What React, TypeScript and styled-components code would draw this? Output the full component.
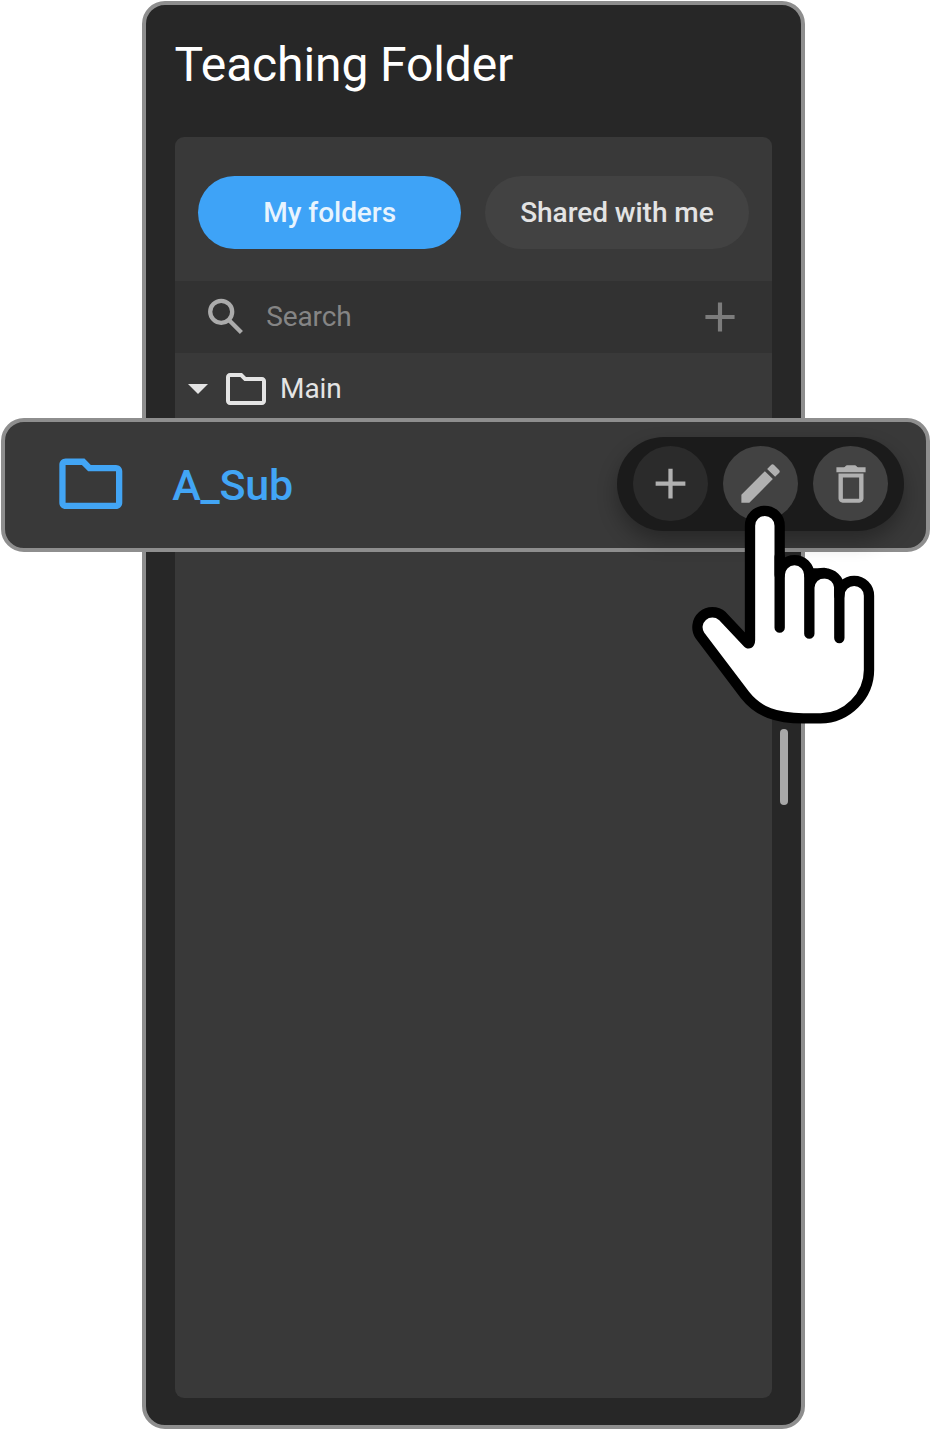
import React from "react";
import styled, { createGlobalStyle } from "styled-components";
import { MdAdd, MdArrowDropDown, MdEdit } from "react-icons/md";

const GlobalStyle = createGlobalStyle`
  *, *::before, *::after { box-sizing: border-box; }
  body { margin: 0; background: #fff; font-family: Roboto, sans-serif; }
  svg { display: block; flex: none; }
`;

const Page = styled.main`
  position: relative;
  width: 930px;
  height: 1430px;
  padding: 0.7px 0 0 142.3px;
  overflow: hidden;
`;

const Panel = styled.section`
  display: flex;
  flex-direction: column;
  width: 662.4px;
  height: 1428.6px;
  padding: 0 0 0 28.3px;
  background: #272727;
  border: 4px solid #8e8e8e;
  border-radius: 23px;
`;

const Title = styled.h1`
  height: 132.3px;
  margin: 0;
  padding-top: 32px;
  color: #fff;
  font-size: 48px;
  font-weight: 400;
  line-height: 56px;
  letter-spacing: -0.12px;
`;

const Body = styled.div`
  display: flex;
  align-items: flex-start;
`;

const Browser = styled.div`
  width: 597.4px;
  height: 1261px;
  background: #393939;
  border-radius: 9px;
  overflow: hidden;
`;

const Scrollbar = styled.div`
  width: 8px;
  height: 76px;
  margin: 592px 0 0 8.3px;
  border-radius: 4px;
  background: #a8a8a8;
`;

const Tabs = styled.div`
  display: flex;
  gap: 24px;
  height: 144px;
  padding: 39.5px 23.5px 0;
`;

const Tab = styled.button<{ $active?: boolean }>`
  flex: 1;
  height: 72.5px;
  padding: 0 0 1px;
  border: 0;
  border-radius: 37px;
  background: ${(p) => (p.$active ? "#3ea3f7" : "#424242")};
  color: ${(p) => (p.$active ? "#e8f4fe" : "#e3e3e3")};
  font: 500 28px Roboto, sans-serif;
  letter-spacing: -0.05px;
`;

const SearchBar = styled.div`
  display: flex;
  align-items: center;
  height: 72px;
  padding: 0 26.6px 0 27.6px;
  background: #323232;
  color: #ababab;
`;

const Placeholder = styled.span`
  flex: 1;
  margin-left: 16px;
  color: #858585;
  font-size: 28px;
  letter-spacing: -0.1px;
`;

const AddButton = styled.span`
  color: #7c7c7c;
`;

const TreeRow = styled.div`
  display: flex;
  align-items: center;
  height: 72px;
  color: #e4e4e4;
  font-size: 28px;
`;

const Caret = styled(MdArrowDropDown)`
  margin: -2px 0 0 -0.5px;
`;

const TreeLabel = styled.span`
  margin-left: 10px;
  letter-spacing: -0.15px;
`;

const SelectedRow = styled.div`
  position: absolute;
  left: 0.5px;
  top: 417.7px;
  display: flex;
  align-items: center;
  width: 929.5px;
  height: 134px;
  padding: 0 22.1px 2px 48.2px;
  background: #393939;
  border: 4px solid #8e8e8e;
  border-radius: 23px;
  color: #42a5f5;
`;

const SelectedLabel = styled.span`
  flex: 1;
  margin-left: 44px;
  padding-top: 2.4px;
  font-size: 43px;
  font-weight: 500;
  letter-spacing: -0.25px;
`;

const Actions = styled.div`
  display: flex;
  align-items: center;
  gap: 15.3px;
  width: 286.6px;
  height: 94px;
  padding: 0 15.5px;
  border-radius: 47px;
  background: #1b1b1b;
  box-shadow: 0 10px 20px rgba(0, 0, 0, 0.3);
`;

const Action = styled.button<{ $dim?: boolean }>`
  display: grid;
  place-items: center;
  width: 75px;
  height: 75px;
  padding: 0;
  border: 0;
  border-radius: 50%;
  background: ${(p) => (p.$dim ? "#2b2b2b" : "#424242")};
  color: #b0b0b0;
`;

const Pointer = styled.svg`
  position: absolute;
  left: 680px;
  top: 490px;
`;

function SearchIcon() {
  return (
    <svg width="48" height="48" viewBox="0 0 24 24" fill="none" stroke="currentColor" strokeWidth="2.15">
      <circle cx="9.6" cy="9.4" r="5.5" />
      <path d="M13.7 13.7L19.7 19.7" />
    </svg>
  );
}

function FolderIcon({ size }: { size: number }) {
  return (
    <svg width={size} height={size} viewBox="0 0 24 24" fill="currentColor">
      <path d="M9.17 6l2 2H20v10H4V6h5.17M10 4H4c-1.1 0-1.99.9-1.99 2L2 18c0 1.1.9 2 2 2h16c1.1 0 2-.9 2-2V8c0-1.1-.9-2-2-2h-8l-2-2z" />
    </svg>
  );
}

function TrashIcon() {
  return (
    <svg width="50" height="50" viewBox="0 0 24 24" fill="currentColor" fillRule="evenodd">
      <path d="M5 4h3.6c.6 0 .8-1 1.6-1h3.6c.8 0 1 1 1.6 1H19v2.35H5z" />
      <path d="M6 6.95h12V19c0 1.1-.9 2-2 2H8c-1.1 0-2-.9-2-2zM8.1 8.9v10.2h7.8V8.9z" />
    </svg>
  );
}

function HandPointer() {
  return (
    <Pointer
      width="210"
      height="240"
      viewBox="0 0 630 720"
      fill="none"
      stroke="#000"
      strokeWidth="31"
      strokeLinecap="round"
      strokeLinejoin="round"
    >
      <path
        fill="#fff"
        d="M210 107a44.5 44.5 0 0 1 89 0V255a44.5 44.5 0 0 1 89 0L402 250H433A44.5 44.5 0 0 1 478 293V317a44.5 44.5 0 0 1 89 0V540C567 618 500 685 422 685H370C290 685 236 667 195 615L60 437A45 45 0 0 1 127 378L204 460Q210 461 210 450Z"
      />
      <path d="M299 200V413M388 255V431M388 293A45 45 0 0 1 433 249M478 293V444" />
    </Pointer>
  );
}

export default function App() {
  return (
    <>
      <GlobalStyle />
      <Page>
        <Panel>
          <Title>Teaching Folder</Title>
          <Body>
            <Browser>
              <Tabs>
                <Tab $active>My folders</Tab>
                <Tab>Shared with me</Tab>
              </Tabs>
              <SearchBar>
                <SearchIcon />
                <Placeholder>Search</Placeholder>
                <AddButton>
                  <MdAdd size={50} />
                </AddButton>
              </SearchBar>
              <TreeRow>
                <Caret size={48} />
                <FolderIcon size={48} />
                <TreeLabel>Main</TreeLabel>
              </TreeRow>
            </Browser>
            <Scrollbar />
          </Body>
        </Panel>
        <SelectedRow>
          <FolderIcon size={75.6} />
          <SelectedLabel>A_Sub</SelectedLabel>
          <Actions>
            <Action $dim aria-label="Add folder">
              <MdAdd size={51} />
            </Action>
            <Action aria-label="Rename folder">
              <MdEdit size={51} />
            </Action>
            <Action aria-label="Delete folder">
              <TrashIcon />
            </Action>
          </Actions>
        </SelectedRow>
        <HandPointer />
      </Page>
    </>
  );
}
